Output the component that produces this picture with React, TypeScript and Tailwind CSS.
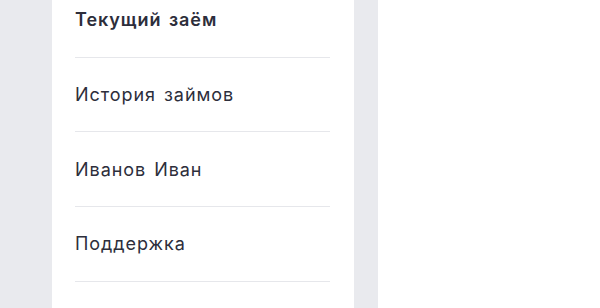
const items = [
  { label: "Текущий заём", active: true },
  { label: "История займов", active: false },
  { label: "Иванов Иван", active: false },
  { label: "Поддержка", active: false },
];

export default function App() {
  return (
    <div className="flex h-[308px] w-[600px] overflow-hidden bg-white font-['Inter','Noto_Sans',sans-serif] text-[#2d2e3b]">
      <div className="w-[52px] shrink-0 bg-[#e9eaee]" />
      <nav className="w-[302px] shrink-0 bg-white pl-[23px] pr-[24px]">
        <ul className="-mt-[17px]">
          {items.map((item) => (
            <li
              key={item.label}
              className={`flex h-[74.7px] items-center border-b border-[#e6e7eb] text-[18px] tracking-[0.95px] [word-spacing:2px] ${
                item.active ? "font-semibold" : "font-normal"
              }`}
            >
              {item.label}
            </li>
          ))}
        </ul>
      </nav>
      <div className="w-[24px] shrink-0 bg-[#e9eaee]" />
      <div className="flex-1 bg-white" />
    </div>
  );
}
